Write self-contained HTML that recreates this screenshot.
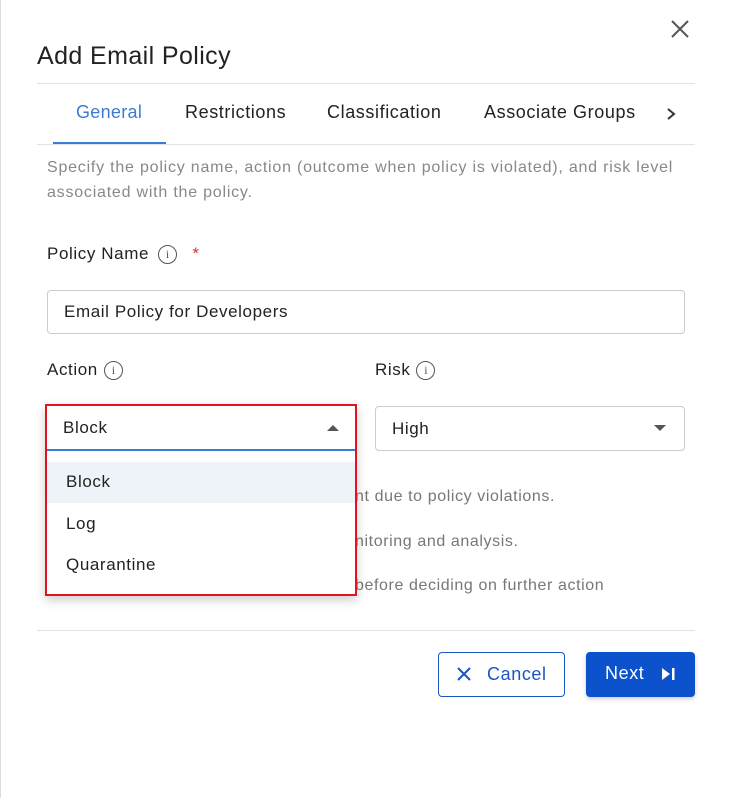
<!DOCTYPE html>
<html><head><style>
*{box-sizing:border-box;margin:0;padding:0}
body{width:742px;height:798px;background:#fff;font-family:"Liberation Sans",sans-serif;color:#222;position:relative;overflow:hidden;border-left:1px solid #ddd;letter-spacing:0.6px}
.a{position:absolute;white-space:nowrap}
.info{display:inline-block;width:19px;height:19px;border:1.5px solid #555;border-radius:50%;font-size:12px;text-align:center;line-height:16px;color:#555;vertical-align:middle;font-family:"Liberation Serif",serif;margin-left:6px;letter-spacing:0}
</style></head><body>
<svg class="a" style="left:669px;top:19px" width="20" height="20"><path d="M2 2L18 18M18 2L2 18" stroke="#555" stroke-width="2"/></svg>
<div class="a" style="left:36px;top:42px;font-size:25px;color:#222;letter-spacing:0.4px">Add Email Policy</div>
<div class="a" style="left:36px;top:83px;width:658px;height:1px;background:#e2e2e2"></div>
<div class="a" style="left:75px;top:102px;font-size:18px;color:#3a7bd5;letter-spacing:0.3px">General</div>
<div class="a" style="left:184px;top:102px;font-size:18px">Restrictions</div>
<div class="a" style="left:326px;top:102px;font-size:18px">Classification</div>
<div class="a" style="left:483px;top:102px;font-size:18px">Associate Groups</div>
<svg class="a" style="left:664px;top:106px" width="12" height="16"><path d="M3 3L9 8L3 13" stroke="#333" stroke-width="2" fill="none"/></svg>
<div class="a" style="left:36px;top:144px;width:658px;height:1px;background:#e2e2e2"></div>
<div class="a" style="left:52px;top:142px;width:113px;height:2px;background:#3a7bd5"></div>
<div class="a" style="left:46px;top:155px;font-size:16px;color:#888;line-height:25px;letter-spacing:0.78px">Specify the policy name, action (outcome when policy is violated), and risk level<br>associated with the policy.</div>
<div class="a" style="left:46px;top:244px;font-size:17px">Policy Name<span class="info" style="margin-left:9px">i</span> <span style="color:#d33;margin-left:10px">*</span></div>
<div class="a" style="left:46px;top:290px;width:638px;height:44px;border:1px solid #ccc;border-radius:4px;padding:11px 16px;font-size:17px">Email Policy for Developers</div>
<div class="a" style="left:46px;top:360px;font-size:17px">Action<span class="info">i</span></div>
<div class="a" style="left:374px;top:360px;font-size:17px">Risk<span class="info">i</span></div>
<div class="a" style="left:374px;top:406px;width:310px;height:45px;border:1px solid #ccc;border-radius:4px;padding:12px 16px;font-size:17px">High</div>
<svg class="a" style="left:653px;top:425px" width="12" height="8"><path d="M0 0H12L6 6Z" fill="#555"/></svg>
<div class="a" style="left:354px;top:488px;font-size:16px;color:#777">nt due to policy violations.</div>
<div class="a" style="left:354px;top:533px;font-size:16px;color:#777">nitoring and analysis.</div>
<div class="a" style="left:354px;top:577px;font-size:16px;color:#777">before deciding on further action</div>
<div class="a" style="left:44px;top:404px;width:312px;height:192px;border:2px solid #e0141e;background:#fff;box-shadow:0 4px 10px rgba(0,0,0,.2)"></div>
<div class="a" style="left:46px;top:406px;width:308px;height:45px;border-bottom:2px solid #3a7bd5;padding:12px 16px;font-size:17px">Block</div>
<svg class="a" style="left:326px;top:424px" width="12" height="8"><path d="M0 7H12L6 1Z" fill="#555"/></svg>
<div class="a" style="left:46px;top:462px;width:308px;height:41px;background:#eef3f9;padding:10px 19px;font-size:17px">Block</div>
<div class="a" style="left:65px;top:514px;font-size:17px">Log</div>
<div class="a" style="left:65px;top:555px;font-size:17px">Quarantine</div>
<div class="a" style="left:36px;top:630px;width:658px;height:1px;background:#e2e2e2"></div>
<div class="a" style="left:437px;top:652px;width:127px;height:45px;border:1px solid #1a56c4;border-radius:4px;color:#1a56c4;font-size:18px;padding:11px 0 0 48px">Cancel</div>
<svg class="a" style="left:455px;top:666px" width="16" height="16"><path d="M2 2L14 14M14 2L2 14" stroke="#1a56c4" stroke-width="2"/></svg>
<div class="a" style="left:585px;top:652px;width:109px;height:45px;background:#0b52cc;border-radius:4px;color:#fff;font-size:18px;padding:11px 0 0 19px;box-shadow:0 2px 4px rgba(0,0,0,.2)">Next</div>
<svg class="a" style="left:659px;top:666px" width="16" height="16"><path d="M2 2L10 8L2 14Z" fill="#fff"/><rect x="12" y="2" width="2.5" height="12" fill="#fff"/></svg>
</body></html>
